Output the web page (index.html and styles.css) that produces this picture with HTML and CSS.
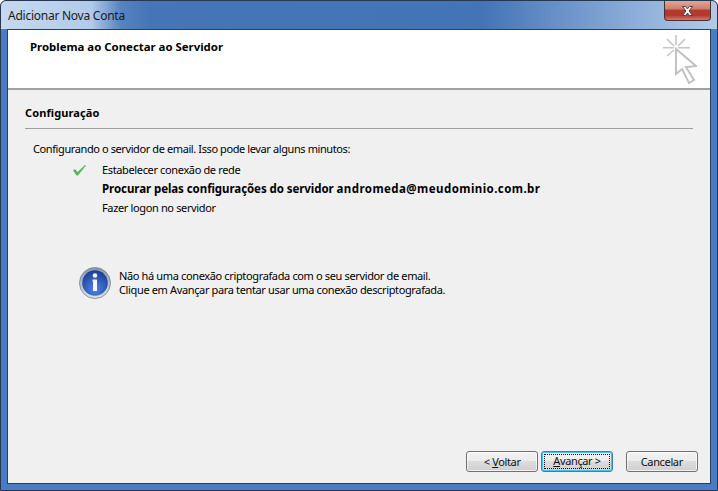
FILE: index.html
```html
<!DOCTYPE html>
<html lang="pt-BR">
<head>
<meta charset="utf-8">
<title>Adicionar Nova Conta</title>
<link rel="stylesheet" href="styles.css">
</head>
<body>
<div class="window">
  <div class="titlebar">
    <span class="title">Adicionar Nova Conta</span>
    <button class="close" aria-label="Fechar">
      <svg width="15" height="12" viewBox="0 0 15 12"><path d="M2.500 1.500h3l2 2.400 2-2.400h3l-3.400 4.500 3.400 4.500h-3l-2-2.400-2 2.400h-3l3.400-4.500z" fill="#fff" stroke="#4a3f3f" stroke-width="1"/></svg>
    </button>
  </div>
  <div class="client">
    <header class="head">
      <h1 class="head-title">Problema ao Conectar ao Servidor</h1>
      <svg class="head-icon" width="34" height="50" viewBox="0 0 34 50" fill="none">
        <path d="M13 1v10M0 13.700h11M15 13.700h12M4 5l7 7M22 5l-7 7M4 22l7-6" stroke="#c6c6c6" stroke-width="1.600"/>
        <path d="M13 15v25l6-5 7 14 5-3-8-13 10-1z" fill="#fff" stroke="#c2c2c2" stroke-width="2"/>
      </svg>
    </header>
    <main class="body">
      <h2 class="section">Configuração</h2>
      <p class="intro">Configurando o servidor de email. Isso pode levar alguns minutos:</p>
      <ul class="steps">
        <li class="step">
          <svg class="check" width="15" height="12" viewBox="0 0 15 12"><path d="M1 6.500l2-1.500 2.500 3L13 1l1 .5-8 10h-1.500z" fill="#5cb85a"/></svg>
          <span>Estabelecer conexão de rede</span>
        </li>
        <li class="step step-bold"><span>Procurar pelas configurações do servidor</span> <span class="address">andromeda@meudominio.com.br</span></li>
        <li class="step"><span>Fazer logon no servidor</span></li>
      </ul>
      <div class="notice">
        <svg class="info" width="32" height="34" viewBox="0 0 32 34">
          <defs>
            <radialGradient id="ball" cx="50%" cy="75%" r="70%">
              <stop offset="0" stop-color="#4f83e0"/>
              <stop offset="1" stop-color="#1f3f9a"/>
            </radialGradient>
            <linearGradient id="ring" x1="0" y1="0" x2="0" y2="1">
              <stop offset="0" stop-color="#8a97a8"/>
              <stop offset="1" stop-color="#dfe4ec"/>
            </linearGradient>
          </defs>
          <circle cx="16" cy="17" r="15.500" fill="url(#ring)" stroke="#74808f" stroke-width=".8"/>
          <circle cx="16" cy="17" r="12.800" fill="url(#ball)"/>
          <circle cx="16" cy="9.500" r="2.300" fill="#f2f5fb"/>
          <path d="M13.500 13.500h4.500v11.500h-4v-9.500h-.5z" fill="#f2f5fb"/>
        </svg>
        <p class="notice-text">Não há uma conexão criptografada com o seu servidor de email.<br>Clique em Avançar para tentar usar uma conexão descriptografada.</p>
      </div>
    </main>
    <footer class="actions">
      <button class="btn btn-back">&lt; <u>V</u>oltar</button>
      <button class="btn btn-next"><span class="focus"><u>A</u>vançar &gt;</span></button>
      <button class="btn btn-cancel">Cancelar</button>
    </footer>
  </div>
</div>
</body>
</html>
```
FILE: styles.css
```css
* { box-sizing: border-box; }
html, body { margin: 0; height: 100%; }
body {
  font-family: "Noto Sans", "DejaVu Sans", sans-serif;
  font-size: 11px;
  letter-spacing: -.36px;
  color: #000;
  background: #fff;
}
.window {
  width: 718px;
  height: 491px;
  display: flex;
  flex-direction: column;
  padding: 0 6px 6px;
  border: 1px solid #26384f;
  border-radius: 6px 6px 0 0;
  background:
    linear-gradient(90deg, rgba(205,222,242,.95) 0, rgba(190,212,238,.9) 90px, rgba(110,150,205,.4) 120px, rgba(70,120,185,0) 150px) 0 0 / 100% 28px no-repeat,
    linear-gradient(90deg, #4676b8 0, #4374b6 480px, #8fb0da 640px, #b4cbe6 718px) 0 0 / 100% 28px no-repeat,
    #4a7cc3;
}
.titlebar {
  height: 28px;
  flex: none;
  display: flex;
  align-items: flex-start;
  justify-content: space-between;
}
.title {
  font-size: 12px;
  line-height: 16px;
  margin-top: 7px;
  margin-left: 1px;
  letter-spacing: -.25px;
  color: #1a1a1a;
}
.close {
  width: 47px;
  height: 20px;
  padding: 0;
  display: flex;
  align-items: center;
  justify-content: center;
  border: 1px solid #4a2f30;
  border-top: 0;
  border-radius: 0 0 4px 4px;
  background: linear-gradient(180deg, #e0a89c 0, #cf7f70 40%, #b5392c 50%, #b23a2d 75%, #d2796b 100%);
}
.client {
  flex: 1;
  display: flex;
  flex-direction: column;
  border: 1px solid #2b3e5c;
  background: #f0f0f0;
}
.head {
  height: 60px;
  flex: none;
  display: flex;
  justify-content: space-between;
  padding: 4px 13px 0 22px;
  background: #fff;
  border-bottom: 2px solid #a0a0a0;
}
.head-title {
  margin: 5px 0 0;
  font-size: 11.400px;
  line-height: 15px;
  font-weight: 700;
  letter-spacing: 0;
}
.head-icon { margin-top: 0; }
.body {
  flex: 1;
  display: flex;
  flex-direction: column;
  padding: 15px 17px 0 17px;
}
.section {
  margin: 0;
  height: 24px;
  font-size: 11px;
  line-height: 15px;
  font-weight: 700;
  letter-spacing: .1px;
  border-bottom: 1px solid #a0a0a0;
}
.intro {
  margin: 12px 0 0 8px;
  line-height: 15px;
  letter-spacing: -.4px;
}
.steps {
  list-style: none;
  margin: 6px 0 0 77px;
  padding: 0;
  display: flex;
  flex-direction: column;
  gap: 4px;
}
.step {
  position: relative;
  height: 15px;
  line-height: 15px;
}
.step-bold {
  font-weight: 700;
  font-size: 11.500px;
  letter-spacing: -.07px;
}
.address { letter-spacing: .43px; }
.check {
  position: absolute;
  left: -30px;
  top: 2px;
}
.notice {
  margin: 51px 0 0 54px;
  display: flex;
  align-items: flex-start;
  gap: 8px;
}
.notice-text {
  margin: 3px 0 0;
  line-height: 14px;
}
.actions {
  flex: none;
  display: flex;
  padding: 0 12px 11px 458px;
}
.btn {
  width: 73px;
  height: 21px;
  padding: 0;
  font: inherit;
  letter-spacing: inherit;
  line-height: 15px;
  color: #111;
  border: 1px solid #707070;
  border-radius: 3px;
  background: linear-gradient(180deg, #f2f2f2 0, #ebebeb 48%, #dddddd 50%, #cfcfcf 100%);
  box-shadow: inset 0 0 0 1px rgba(255,255,255,.7);
}
.btn-next {
  width: 72px;
  margin-left: 3px;
  padding: 2px;
  border-color: #3c7fb1;
  box-shadow: inset 0 0 0 1px #48c2ee;
}
.focus {
  display: block;
  height: 100%;
  line-height: 13px;
  outline: 1px dotted #111;
  outline-offset: -1px;
}
.btn-cancel { margin-left: 13px; }
```
